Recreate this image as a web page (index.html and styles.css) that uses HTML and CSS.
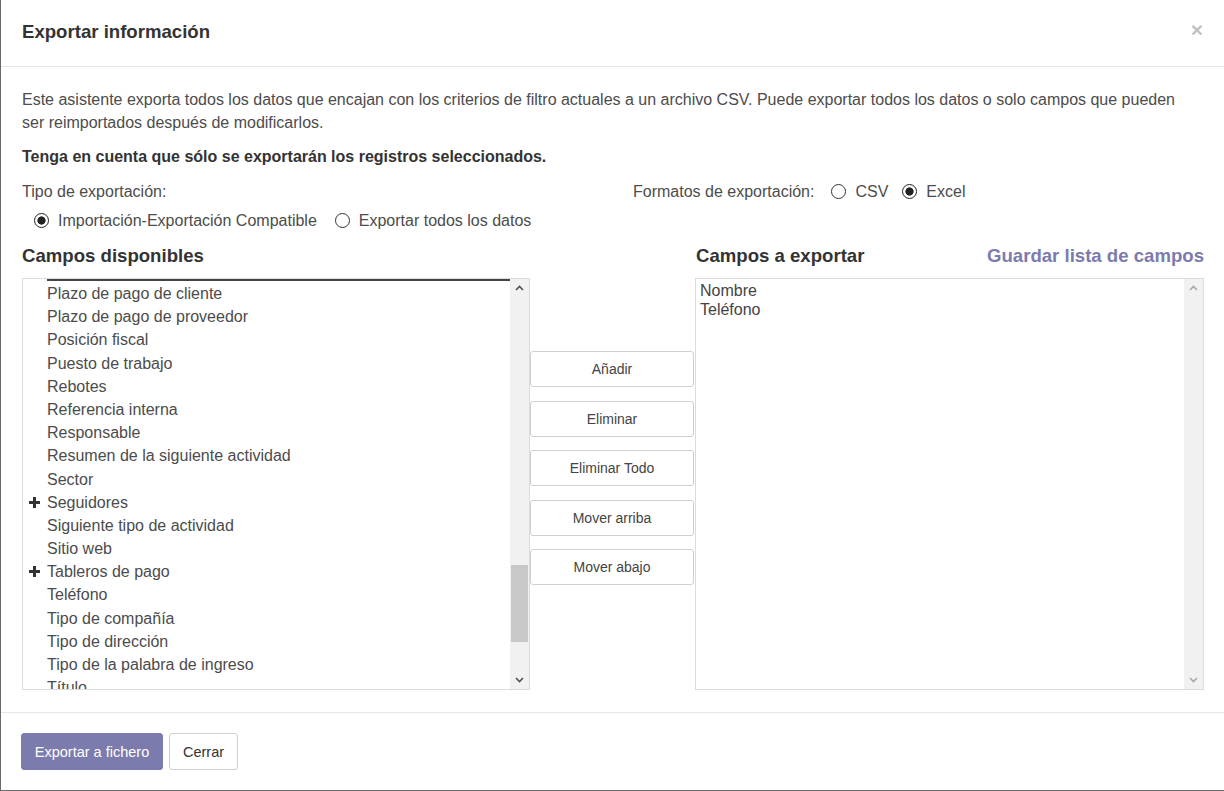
FILE: index.html
```html
<!DOCTYPE html>
<html lang="es">
<head>
<meta charset="utf-8">
<title>Exportar información</title>
<link rel="stylesheet" href="styles.css">
</head>
<body>
<div class="dialog">
  <header class="dlg-header">
    <h4 class="dlg-title">Exportar información</h4>
    <span class="dlg-close">×</span>
  </header>
  <main class="dlg-body">
    <p class="intro">Este asistente exporta todos los datos que encajan con los criterios de filtro actuales a un archivo CSV. Puede exportar todos los datos o solo campos que pueden ser reimportados después de modificarlos.</p>
    <p class="note">Tenga en cuenta que sólo se exportarán los registros seleccionados.</p>
    <div class="options">
      <div class="opt-label">Tipo de exportación:</div>
      <div class="opt-format">
        <span class="opt-format-label">Formatos de exportación:</span>
        <label class="radio"><span class="dot"></span>CSV</label>
        <label class="radio"><span class="dot checked"></span>Excel</label>
      </div>
      <div class="opt-types">
        <label class="radio"><span class="dot checked"></span>Importación-Exportación Compatible</label>
        <label class="radio"><span class="dot"></span>Exportar todos los datos</label>
      </div>
    </div>
    <div class="fields">
      <h4 class="fields-title">Campos disponibles</h4>
      <div></div>
      <div class="fields-title-right">
        <h4 class="fields-title">Campos a exportar</h4>
        <a class="save-link">Guardar lista de campos</a>
      </div>

      <div class="box">
        <div class="list">
          <div class="cut-item"></div>
          <div class="item"><span class="ico"></span>Plazo de pago de cliente</div>
          <div class="item"><span class="ico"></span>Plazo de pago de proveedor</div>
          <div class="item"><span class="ico"></span>Posición fiscal</div>
          <div class="item"><span class="ico"></span>Puesto de trabajo</div>
          <div class="item"><span class="ico"></span>Rebotes</div>
          <div class="item"><span class="ico"></span>Referencia interna</div>
          <div class="item"><span class="ico"></span>Responsable</div>
          <div class="item"><span class="ico"></span>Resumen de la siguiente actividad</div>
          <div class="item"><span class="ico"></span>Sector</div>
          <div class="item"><span class="ico"><svg width="11" height="11" viewBox="0 0 11 11"><path d="M5.5 0v11M0 5.5h11" stroke="#333" stroke-width="3"/></svg></span>Seguidores</div>
          <div class="item"><span class="ico"></span>Siguiente tipo de actividad</div>
          <div class="item"><span class="ico"></span>Sitio web</div>
          <div class="item"><span class="ico"><svg width="11" height="11" viewBox="0 0 11 11"><path d="M5.5 0v11M0 5.5h11" stroke="#333" stroke-width="3"/></svg></span>Tableros de pago</div>
          <div class="item"><span class="ico"></span>Teléfono</div>
          <div class="item"><span class="ico"></span>Tipo de compañía</div>
          <div class="item"><span class="ico"></span>Tipo de dirección</div>
          <div class="item"><span class="ico"></span>Tipo de la palabra de ingreso</div>
          <div class="item"><span class="ico"></span>Título</div>
        </div>
        <div class="sbar">
          <div class="sarrow"><svg width="9" height="6" viewBox="0 0 9 6"><path d="M1 5l3.5-3.5L8 5" fill="none" stroke="#505050" stroke-width="1.6"/></svg></div>
          <div class="strack"><div class="sthumb"></div></div>
          <div class="sarrow"><svg width="9" height="6" viewBox="0 0 9 6"><path d="M1 1l3.5 3.5L8 1" fill="none" stroke="#505050" stroke-width="1.6"/></svg></div>
        </div>
      </div>

      <div class="actions">
        <button class="btn">Añadir</button>
        <button class="btn">Eliminar</button>
        <button class="btn">Eliminar Todo</button>
        <button class="btn">Mover arriba</button>
        <button class="btn">Mover abajo</button>
      </div>

      <div class="box">
        <div class="selected">
          <div>Nombre</div>
          <div>Teléfono</div>
        </div>
        <div class="sbar">
          <div class="sarrow"><svg width="9" height="6" viewBox="0 0 9 6"><path d="M1 5l3.5-3.5L8 5" fill="none" stroke="#a8a8a8" stroke-width="1.6"/></svg></div>
          <div class="strack"></div>
          <div class="sarrow"><svg width="9" height="6" viewBox="0 0 9 6"><path d="M1 1l3.5 3.5L8 1" fill="none" stroke="#a8a8a8" stroke-width="1.6"/></svg></div>
        </div>
      </div>
    </div>
  </main>
  <footer class="dlg-footer">
    <button class="btn btn-primary">Exportar a fichero</button>
    <button class="btn btn-secondary">Cerrar</button>
  </footer>
</div>
</body>
</html>
```

FILE: styles.css
```css
* { box-sizing: border-box; }
html, body { margin: 0; padding: 0; background: #fff; }
body {
  font-family: "Liberation Sans", Arial, sans-serif;
  font-size: 16px;
  color: #4c4c4c;
}
.dialog {
  width: 1224px;
  height: 791px;
  border-left: 1px solid #6a6a6a;
  border-bottom: 1px solid #6a6a6a;
  display: flex;
  flex-direction: column;
  background: #fff;
}
.dlg-header {
  height: 67px;
  border-bottom: 1px solid #e5e5e5;
  display: flex;
  align-items: center;
  justify-content: space-between;
  padding: 0 21px 2px 21px;
}
.dlg-title {
  margin: 0;
  font-size: 18.6px;
  font-weight: bold;
  color: #333;
}
.dlg-close {
  font-size: 21px;
  font-weight: bold;
  color: #c2c2c2;
  line-height: 1;
  margin-top: -6px;
}
.dlg-body {
  flex: 1;
  padding: 21px 20px 0 21px;
}
.intro {
  margin: 0 0 11px;
  padding-right: 22px;
  line-height: 23px;
}
.note {
  margin: 0 0 12px;
  line-height: 23px;
  font-weight: bold;
  color: #333;
}
.options {
  display: grid;
  grid-template-columns: 611px 1fr;
  row-gap: 6px;
  line-height: 23px;
}
.opt-format {
  display: flex;
  align-items: center;
}
.opt-format-label { margin-right: 17px; }
.opt-format .radio { margin-right: 14px; }
.opt-types {
  grid-column: 1 / 3;
  display: flex;
  padding-left: 12px;
}
.opt-types .radio { margin-right: 18px; }
.radio {
  display: inline-flex;
  align-items: center;
}
.dot {
  width: 15px;
  height: 15px;
  border: 1px solid #333;
  border-radius: 50%;
  margin-right: 9px;
  background: #fff;
}
.dot.checked {
  border-color: #222;
  background: radial-gradient(circle, #222 0 3.8px, #fff 4.4px);
}
.fields {
  display: grid;
  grid-template-columns: 508px 165px 1fr;
  grid-template-rows: auto 412px;
  margin-top: 13px;
}
.fields-title {
  margin: 0;
  font-size: 18.6px;
  font-weight: bold;
  color: #333;
  line-height: 21px;
  height: 33px;
}
.fields-title-right {
  display: flex;
  justify-content: space-between;
}
.fields-title-right .fields-title { padding-left: 1px; }
.save-link {
  font-size: 18.6px;
  font-weight: bold;
  color: #7c7bad;
  line-height: 21px;
}
.box {
  border: 1px solid #dcdcdc;
  display: flex;
  overflow: hidden;
}
.list {
  flex: 1;
  overflow: hidden;
}
.cut-item {
  margin-left: 24px;
  margin-bottom: 1px;
  border-top: 2px solid #444;
}
.item {
  height: 23.2px;
  line-height: 23.2px;
  display: flex;
  align-items: center;
  padding-left: 6px;
  white-space: nowrap;
}
.ico {
  width: 18px;
  display: flex;
  align-items: center;
}
.sbar {
  width: 19px;
  background: #f1f1f1;
  display: flex;
  flex-direction: column;
}
.sarrow {
  height: 18px;
  display: flex;
  align-items: center;
  justify-content: center;
}
.strack { flex: 1; }
.sthumb {
  margin: 268px 1px 0;
  height: 77px;
  background: #c8c8c8;
}
.actions {
  display: flex;
  flex-direction: column;
  gap: 13.5px;
  padding-top: 73px;
  padding-right: 1px;
}
.btn {
  font-family: "Liberation Sans", Arial, sans-serif;
  font-size: 14px;
  color: #444;
  background: #fff;
  border: 1px solid #cfcfcf;
  border-radius: 3px;
  height: 36px;
  padding: 0 12px;
}
.selected {
  flex: 1;
  padding: 2px 4px;
  line-height: 19px;
  color: #444;
}
.dlg-footer {
  border-top: 1px solid #e5e5e5;
  padding: 20px 20px 0 20px;
  height: 78px;
  display: flex;
  gap: 6px;
  align-items: flex-start;
}
.btn-primary {
  background: #7c7bad;
  border-color: #7c7bad;
  color: #fff;
  height: 37px;
  width: 142px;
  font-size: 14.5px;
}
.btn-secondary {
  height: 37px;
  width: 69px;
  font-size: 14.5px;
  color: #333;
}
```
